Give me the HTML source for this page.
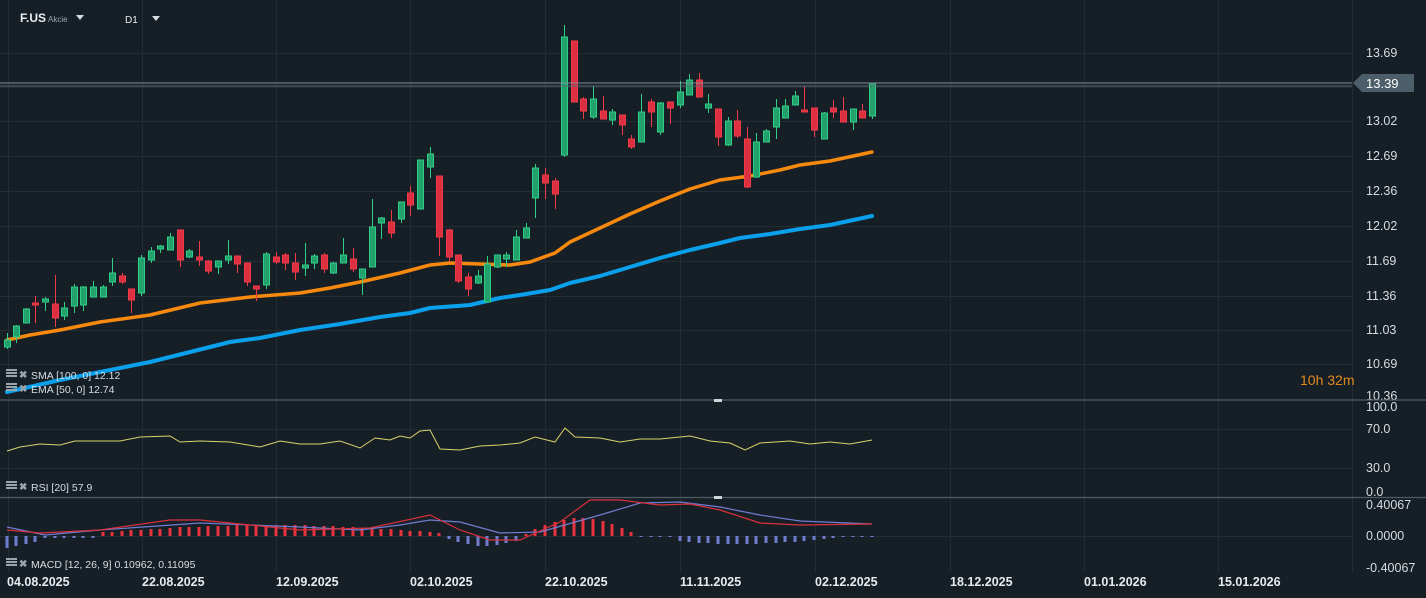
<!DOCTYPE html>
<html><head><meta charset="utf-8"><style>
html,body{margin:0;padding:0;background:#171f26;width:1426px;height:598px;overflow:hidden;font-family:"Liberation Sans",sans-serif}
svg{display:block}
</style></head><body>
<svg id="s" width="1426" height="598" xmlns="http://www.w3.org/2000/svg" font-family="Liberation Sans, sans-serif">
<rect width="1426" height="598" fill="#171f26"/>
<g id="grid" stroke="#232d35" stroke-width="1"></g>
<g id="ma" fill="none" stroke-linejoin="round" stroke-linecap="round"></g>
<g id="candles"></g>
<line x1="0" y1="83" x2="1352" y2="83" stroke="#7f919c" stroke-width="1"/>
<line x1="0" y1="86" x2="1352" y2="86" stroke="#5d6f7a" stroke-width="1"/>
<polygon points="1353,83 1362,74 1414,74 1414,92 1362,92" fill="#4b5e6a"/>
<text x="1366" y="88" fill="#fff" font-size="13">13.39</text>
<g fill="#d6dde2" font-size="12.5" id="axis"></g>
<line x1="0" y1="400" x2="1426" y2="400" stroke="#4f5b64" stroke-width="1.3"/>
<line x1="0" y1="497.5" x2="1426" y2="497.5" stroke="#4f5b64" stroke-width="1.3"/>
<rect x="714" y="399" width="8" height="3" fill="#cfd6da"/>
<rect x="714" y="496" width="8" height="3" fill="#cfd6da"/>
<g id="rsi" fill="none"></g>
<g id="macd"></g>
<text x="1300" y="385" fill="#e08a1e" font-size="14">10h <tspan fill="#e08a1e">32m</tspan></text>
<text x="20" y="22" fill="#e8edf0" font-size="12" font-weight="bold">F.US</text>
<text x="48" y="22" fill="#9aa7b0" font-size="8">Akcie</text>
<polygon points="76,15 84,15 80,20" fill="#d6dde2"/>
<text x="125" y="23" fill="#e8edf0" font-size="10">D1</text>
<polygon points="152,16 160,16 156,21" fill="#d6dde2"/>
<g font-size="10.5" fill="#d6dde2">
<text x="31" y="379">SMA [100,  0] 12.12</text>
<text x="31" y="393">EMA [50,  0] 12.74</text>
<text x="31" y="491">RSI [20]  57.9</text>
<text x="31" y="568">MACD [12,  26,  9] 0.10962,  0.11095</text>
</g>
<g fill="#9aa4ab" id="leg"></g>
<g fill="#e6ebee" font-size="12.5" font-weight="bold" id="dates"></g>
</svg>
<script>
const NS="http://www.w3.org/2000/svg";
function el(p,t,a){const e=document.createElementNS(NS,t);for(const k in a)e.setAttribute(k,a[k]);p.appendChild(e);return e}
const grid=document.getElementById('grid');
[53,87,121,156,191,226,261,296,330,364].forEach(y=>el(grid,'line',{x1:0,y1:y+.5,x2:1352,y2:y+.5}));
[429,468,536].forEach(y=>el(grid,'line',{x1:0,y1:y+.5,x2:1352,y2:y+.5}));
const vx=[8,142,276,410,545,680,815,950,1084,1218,1352];
vx.forEach(x=>el(grid,'line',{x1:x+.5,y1:0,x2:x+.5,y2:572}));
const ax=document.getElementById('axis');
[["13.69",53],["13.02",121],["12.69",156],["12.36",191],["12.02",226],["11.69",261],["11.36",296],["11.03",330],["10.69",364],["10.36",396],["100.0",407],["70.0",429],["30.0",468],["0.0",492],["0.40067",505],["0.0000",536],["-0.40067",568]].forEach(([t,y])=>{const e=el(ax,'text',{x:1366,y:y+4});e.textContent=t});
const dates=document.getElementById('dates');
["04.08.2025","22.08.2025","12.09.2025","02.10.2025","22.10.2025","11.11.2025","02.12.2025","18.12.2025","01.01.2026","15.01.2026"].forEach((d,i)=>{const e=el(dates,'text',{x:i==0?7:vx[i],y:586});e.textContent=d});
const leg=document.getElementById('leg');
[375,389,487,564].forEach(y=>{el(leg,'rect',{x:6,y:y-6,width:11,height:2});el(leg,'rect',{x:6,y:y-3,width:11,height:2});el(leg,'rect',{x:6,y:y,width:11,height:2});const t=el(leg,'text',{x:19,y:y+3,'font-size':10,'font-weight':'bold'});t.textContent='✖'});
const C=[[7,340,347,333,349,1],[16,326,337,325,343,1],[26,309,323,308,323,1],[35,303,305,296,323,0],[45,299,302,297,311,1],[55,304,318,275,327,0],[64,308,316,302,320,1],[74,287,306,284,313,1],[83,287,305,286,311,1],[93,287,297,281,297,1],[103,287,297,285,297,1],[112,273,282,258,286,1],[122,276,282,273,284,0],[131,289,300,289,313,0],[141,258,293,255,296,1],[151,251,260,247,263,1],[160,246,249,245,253,1],[170,237,250,233,250,1],[180,230,260,230,267,0],[189,251,257,249,258,1],[199,257,260,241,266,0],[208,261,271,260,274,0],[218,261,267,261,274,1],[228,256,260,240,264,1],[237,256,264,256,273,0],[247,263,282,263,286,0],[256,286,289,286,301,0],[266,254,285,252,289,1],[276,257,262,252,264,0],[285,255,263,253,270,0],[295,263,272,253,280,0],[305,265,268,243,276,1],[314,256,263,254,269,1],[324,255,269,253,273,0],[333,263,273,262,274,1],[343,255,263,238,263,1],[353,259,269,248,272,0],[362,269,278,269,295,1],[372,227,267,199,267,1],[381,218,223,217,239,1],[391,222,233,210,238,0],[401,202,219,202,223,1],[410,193,205,186,216,0],[420,160,209,160,209,1],[430,154,167,147,178,1],[439,176,237,176,256,0],[449,230,257,229,262,0],[458,255,281,255,283,0],[468,277,289,273,296,0],[478,276,283,270,284,1],[487,264,302,256,302,1],[497,255,267,255,268,1],[506,255,259,252,267,1],[516,237,260,230,260,1],[526,228,238,223,238,1],[535,168,198,164,218,1],[545,175,183,168,199,0],[555,181,194,178,209,0],[564,37,155,25,157,1],[574,41,102,41,102,0],[583,99,111,97,119,0],[593,99,117,86,119,1],[603,111,119,96,119,0],[612,112,120,109,125,1],[622,115,125,115,135,0],[631,139,147,135,149,0],[641,112,142,94,142,1],[651,102,112,99,127,0],[660,103,132,102,135,1],[670,102,108,102,124,0],[680,92,105,81,108,1],[689,80,95,74,95,1],[699,80,97,73,97,0],[708,104,108,94,113,1],[718,109,137,109,146,0],[728,121,145,117,146,1],[737,121,136,110,138,0],[747,139,187,127,188,0],[756,142,177,133,178,1],[766,131,142,129,142,1],[776,108,127,99,139,1],[785,106,118,99,118,1],[795,96,105,91,105,1],[804,110,112,86,112,0],[814,108,130,108,137,0],[824,113,139,112,139,1],[833,108,112,100,118,0],[843,111,122,97,122,0],[853,109,122,109,130,1],[862,111,118,104,118,0],[872,83,116,83,119,1]];
const cg=document.getElementById('candles');
C.forEach(([x,t,b,wt,wb,g])=>{const fill=g?'#23a16d':'#dc3040',st=g?'#2fcf86':'#f03a4a';
el(cg,'line',{x1:x+.5,y1:wt,x2:x+.5,y2:wb,stroke:st,'stroke-width':1});
el(cg,'rect',{x:x-2.5,y:t,width:6,height:Math.max(b-t,2),fill:fill,stroke:st,'stroke-width':1});});
const ma=document.getElementById('ma');
const ema=[[7,340],[30,335],[60,330],[100,322],[150,315],[200,303],[250,297],[300,293],[330,288],[360,282],[400,273],[430,265],[450,263],[480,264],[510,265],[530,262],[555,253],[570,242],[600,228],[630,214],[660,201],[690,189],[720,180],[750,176],[780,170],[800,165],[830,161],[872,152]];
const sma=[[7,392],[60,380],[100,372],[150,362],[190,352],[230,342],[260,338],[300,330],[340,324],[380,317],[410,313],[430,308],[470,305],[500,298],[520,295],[550,290],[570,283],[600,276],[630,267],[660,258],[690,250],[720,243],[740,238],[770,234],[800,229],[830,225],[872,216]];
const pts=a=>a.map(p=>p.join(',')).join(' ');
el(ma,'polyline',{points:pts(ema),stroke:'#f7890e','stroke-width':3.5});
el(ma,'polyline',{points:pts(sma),stroke:'#0aa0ec','stroke-width':4});
const rsi=[[7,451],[20,447],[40,444],[60,445],[75,441],[100,441],[120,441],[140,437],[170,436],[180,442],[200,441],[230,442],[260,447],[280,441],[300,444],[320,444],[340,441],[360,448],[375,438],[390,440],[400,436],[410,438],[420,431],[430,430],[440,449],[460,450],[480,446],[500,445],[520,443],[535,437],[555,442],[565,428],[575,437],[600,438],[620,442],[640,439],[660,439],[690,436],[710,441],[730,443],[745,450],[760,443],[790,441],[810,444],[830,442],[850,444],[872,440]];
el(document.getElementById('rsi'),'polyline',{points:pts(rsi),stroke:'#d9d36a','stroke-width':1});
const mg=document.getElementById('macd');
C.forEach(([x],i)=>{let h;
 if(x<40)h=-(12-i*2);else if(x<95)h=-2;else if(x<445)h=Math.round(3+8*Math.sin((x-95)/350*Math.PI));else if(x<525)h=-Math.round(2+8*Math.sin((x-445)/80*Math.PI));else if(x<635)h=Math.round(2+16*Math.sin((x-525)/110*Math.PI));else h=-Math.round(1+7*Math.max(0,Math.sin((x-640)/200*Math.PI)));
 if(x>=635&&x<680)h=-1;
 const c=h>0?'#e8323d':'#6f7dd0';
 if(h>0)el(mg,'rect',{x:x-1.5,y:536-h,width:3,height:h,fill:c});else el(mg,'rect',{x:x-1.5,y:536,width:3,height:-h,fill:c});});
const blue=[[7,527],[45,535],[100,530],[200,523],[300,527],[360,530],[400,525],[430,520],[460,522],[500,533],[540,532],[600,515],[640,503],[680,502],[720,507],[760,515],[800,521],[872,524]];
const red=[[7,530],[40,533],[100,530],[170,520],[200,520],[250,525],[300,530],[370,528],[430,515],[460,530],[490,540],[520,540],[560,522],[590,500],[620,500],[660,505],[690,504],[720,510],[760,523],[800,525],[872,524]];
el(mg,'polyline',{points:pts(blue),stroke:'#6f7dd0','stroke-width':1.2,fill:'none'});
el(mg,'polyline',{points:pts(red),stroke:'#d8303c','stroke-width':1.2,fill:'none'});
</script>
</body></html>
